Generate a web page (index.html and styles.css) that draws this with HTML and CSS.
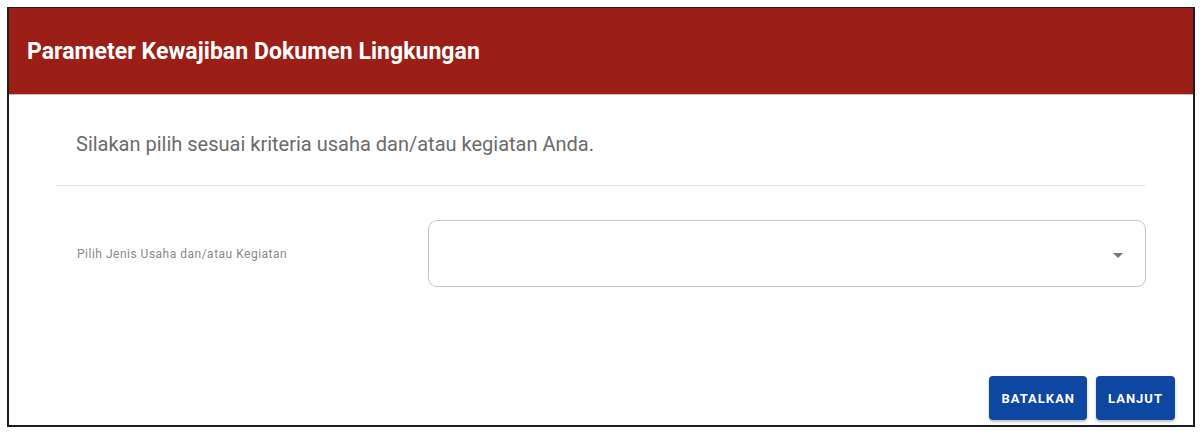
FILE: index.html
```html
<!DOCTYPE html>
<html lang="id">
<head>
<meta charset="utf-8">
<title>Parameter Kewajiban Dokumen Lingkungan</title>
<link rel="stylesheet" href="styles.css">
</head>
<body>
<div class="frame">
  <header class="head">
    <h1 class="title">Parameter Kewajiban Dokumen Lingkungan</h1>
  </header>
  <div class="content">
    <p class="intro">Silakan pilih sesuai kriteria usaha dan/atau kegiatan Anda.</p>
    <hr class="divider">
    <div class="row">
      <label class="label">Pilih Jenis Usaha dan/atau Kegiatan</label>
      <div class="select">
        <svg class="caret" width="10" height="5" viewBox="0 0 10 5"><path d="M0 0 L10 0 L5 5 Z" fill="#757575"/></svg>
      </div>
    </div>
  </div>
  <div class="actions">
    <button class="btn">BATALKAN</button>
    <button class="btn">LANJUT</button>
  </div>
</div>
</body>
</html>
```
FILE: styles.css
```css
* { box-sizing: border-box; }
html, body { margin: 0; padding: 0; background: #fff; }
body {
  font-family: Roboto, "Liberation Sans", Arial, sans-serif;
  padding: 7px 8px 12px 7px;
}
.frame {
  border: 2px solid #1e1e1e;
  border-top-width: 1px;
  height: 420px;
  display: flex;
  flex-direction: column;
  background: #fff;
}
.head {
  background: #9b1f17;
  height: 87px;
  display: flex;
  align-items: center;
  padding-left: 18px;
  border-bottom: 1px solid #d9b7b4;
}
.title {
  margin: 0;
  color: #fff;
  font-size: 23px;
  font-weight: 700;
  letter-spacing: 0.05px;
}
.content {
  padding: 0 47px 0 47px;
  flex: 1;
}
.intro {
  margin: 37px 0 0 20px;
  font-size: 20px;
  color: #6b6b6b;
  line-height: 24px;
}
.divider {
  border: 0;
  border-top: 1px solid #e6e6e6;
  margin: 29px 0 0 0;
}
.row {
  display: flex;
  align-items: center;
  margin-top: 34px;
}
.label {
  width: 372px;
  padding-left: 21px;
  font-size: 12px;
  letter-spacing: 0.5px;
  color: #8a8a8a;
}
.select {
  flex: 1;
  height: 67px;
  border: 1px solid #c4c4c4;
  border-radius: 9px;
  display: flex;
  align-items: center;
  justify-content: flex-end;
  padding-right: 22px;
}
.caret { display: block; margin-top: 3px; }
.actions {
  display: flex;
  justify-content: flex-end;
  gap: 9px;
  padding: 0 18px 5px 0;
}
.btn {
  background: #0d47a1;
  color: #fff;
  border: 0;
  border-radius: 4px;
  height: 44px;
  padding: 0 12px;
  font-family: Roboto, "Liberation Sans", Arial, sans-serif;
  font-weight: 700;
  font-size: 13px;
  letter-spacing: 1px;
  box-shadow: 0 2px 3px rgba(0,0,0,0.25);
}
```
